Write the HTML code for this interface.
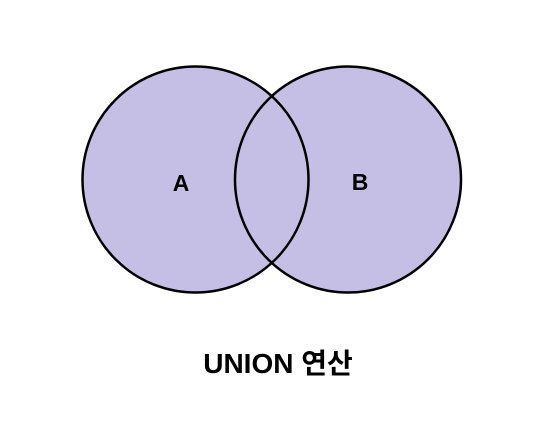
<!DOCTYPE html>
<html><head><style>
html,body{margin:0;padding:0;background:#fff;width:553px;height:425px;overflow:hidden}
</style></head><body>
<svg width="553" height="425" xmlns="http://www.w3.org/2000/svg">
<circle cx="195.5" cy="179.5" r="113" fill="#c5bfe6"/>
<circle cx="348" cy="179.5" r="113" fill="#c5bfe6"/>
<circle cx="195.5" cy="179.5" r="113" fill="none" stroke="#000" stroke-width="2.5"/>
<circle cx="348" cy="179.5" r="113" fill="none" stroke="#000" stroke-width="2.5"/>
<text x="181" y="191" font-family="Liberation Sans, sans-serif" font-weight="bold" font-size="23" text-anchor="middle">A</text>
<text x="360" y="190" font-family="Liberation Sans, sans-serif" font-weight="bold" font-size="23" text-anchor="middle">B</text>
<text x="278" y="373" font-family="Liberation Sans, 'Noto Sans CJK KR', sans-serif" font-weight="bold" font-size="28" text-anchor="middle">UNION 연산</text>
</svg>
</body></html>
